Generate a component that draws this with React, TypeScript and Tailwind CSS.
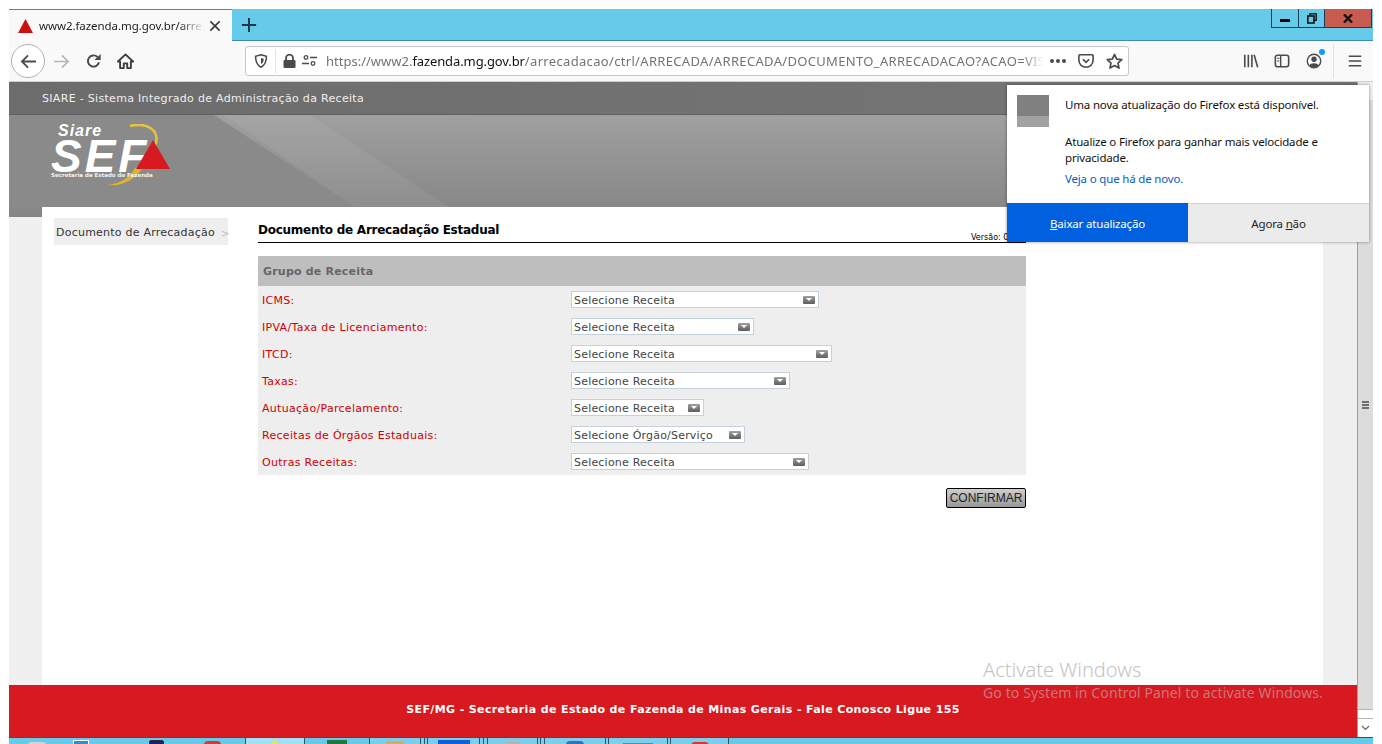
import React from "react";

const ui = "font-['Noto_Sans',sans-serif]";
const verdana = "font-['DejaVu_Sans',sans-serif]";

const rows = [
  { label: "ICMS:", text: "Selecione Receita", width: "w-[248px]" },
  { label: "IPVA/Taxa de Licenciamento:", text: "Selecione Receita", width: "w-[183px]" },
  { label: "ITCD:", text: "Selecione Receita", width: "w-[261px]" },
  { label: "Taxas:", text: "Selecione Receita", width: "w-[219px]" },
  { label: "Autuação/Parcelamento:", text: "Selecione Receita", width: "w-[133px]" },
  { label: "Receitas de Órgãos Estaduais:", text: "Selecione Órgão/Serviço", width: "w-[174px]" },
  { label: "Outras Receitas:", text: "Selecione Receita", width: "w-[238px]" },
];

function Icon({ children, size = 18, className = "" }: { children: React.ReactNode; size?: number; className?: string }) {
  return (
    <svg width={size} height={size} viewBox="0 0 18 18" fill="none" className={className}>
      {children}
    </svg>
  );
}

function TabBar() {
  return (
    <div className="flex h-[32px] bg-[#66cbea] border-b border-[#3f8ea8]">
      <div className="relative flex h-[32px] w-[223px] items-center bg-[#f9f9fa] border-t border-[#2a8fe0] pl-[9px]">
        <svg width="15" height="14" viewBox="0 0 15 14">
          <polygon points="7.5,0 15,14 0,14" fill="#cc1010" />
        </svg>
        <span className={`${ui} ml-[6px] w-[165px] overflow-hidden whitespace-nowrap text-[11.5px] tracking-[-0.06px] text-[#222] [mask-image:linear-gradient(to_right,black_85%,transparent)]`}>
          www2.fazenda.mg.gov.br/arrecadacao
        </span>
        <Icon size={12} className="ml-[5px]">
          <path d="M2 2 L16 16 M16 2 L2 16" stroke="#3a3a3c" strokeWidth="2.4" />
        </Icon>
      </div>
      <div className="flex w-[34px] items-center justify-center">
        <Icon size={16}>
          <path d="M9 1 V17 M1 9 H17" stroke="#1d3a4a" strokeWidth="2.2" />
        </Icon>
      </div>
      <div className="flex-1" />
      <div className="mr-[1px] flex h-[19px] border border-t-0 border-[#1d3f55]">
        <div className="flex w-[27px] items-center justify-center border-r border-[#1d3f55]">
          <div className="mt-[4px] h-[3px] w-[10px] bg-black" />
        </div>
        <div className="flex w-[26px] items-center justify-center border-r border-[#1d3f55]">
          <svg width="10" height="11" viewBox="0 0 10 11" fill="none">
            <rect x="3" y="0.8" width="6.2" height="6.5" stroke="#111" strokeWidth="1.4" />
            <rect x="0.8" y="3" width="6.2" height="7" fill="#66cbea" stroke="#111" strokeWidth="1.6" />
          </svg>
        </div>
        <div className="flex w-[46px] items-center justify-center bg-[#c75b50]">
          <svg width="10" height="9" viewBox="0 0 10 9">
            <path d="M1 0.5 L9 8.5 M9 0.5 L1 8.5" stroke="#111" strokeWidth="2.4" />
          </svg>
        </div>
      </div>
    </div>
  );
}

function Toolbar() {
  return (
    <div className="flex h-[41px] items-center bg-[#f9f9fa] border-b border-[#cfcfd1] pl-[2px] text-[#4a4a4f]">
      <div className="flex h-[34px] w-[34px] items-center justify-center rounded-full border border-[#b1b1b3] bg-white">
        <Icon size={17}>
          <path d="M17 9 H2 M8.5 2.5 L2 9 L8.5 15.5" stroke="#4a4a4f" strokeWidth="1.9" />
        </Icon>
      </div>
      <Icon size={17} className="ml-[8px]">
        <path d="M1 9 H16 M9.5 2.5 L16 9 L9.5 15.5" stroke="#b5b5b7" strokeWidth="1.7" />
      </Icon>
      <Icon size={16} className="ml-[16px]">
        <path d="M14.6 10.5 A6.3 6.3 0 1 1 13 4.6" stroke="#4a4a4f" strokeWidth="2.2" />
        <path d="M16.5 1 V8 H9.5 Z" fill="#4a4a4f" />
      </Icon>
      <Icon size={17} className="ml-[15px]">
        <path d="M1 9 L9 1.5 L17 9 H14.7 V16 H10.8 V11 H7.2 V16 H3.3 V9 Z" stroke="#3d3d40" strokeWidth="2" strokeLinejoin="round" />
      </Icon>
      <div className="ml-[111px] flex h-[30px] w-[884px] items-center rounded-[3px] border border-[#c8c8ca] bg-white">
        <Icon size={14} className="ml-[8px]">
          <path d="M9 1 L16 3 C16 10 14 14.5 9 17 C4 14.5 2 10 2 3 Z" stroke="#4a4a4f" strokeWidth="2" />
          <path d="M9 5 L12.5 6 C12.5 9 11.5 11.5 9 13 Z" fill="#4a4a4f" />
        </Icon>
        <div className="ml-[7px] h-[24px] w-px bg-[#e3e3e5]" />
        <svg width="13" height="14" viewBox="0 0 13 14" className="ml-[7px]">
          <path d="M3 6 V4.2 A3.5 3.5 0 0 1 10 4.2 V6" fill="none" stroke="#4a4a4f" strokeWidth="1.8" />
          <rect x="0.5" y="6" width="12" height="8" rx="1" fill="#4a4a4f" />
        </svg>
        <svg width="15" height="12" viewBox="0 0 15 12" fill="none" className="ml-[6px]">
          <circle cx="4" cy="2.5" r="1.8" stroke="#4a4a4f" strokeWidth="1.3" />
          <path d="M8 2.5 H15 M0 8.5 H7" stroke="#4a4a4f" strokeWidth="1.6" />
          <circle cx="11" cy="8.5" r="1.8" stroke="#4a4a4f" strokeWidth="1.3" />
        </svg>
        <div className={`${ui} ml-[9px] w-[718px] overflow-hidden whitespace-nowrap pt-[1px] text-[13px] text-[#737373] [mask-image:linear-gradient(to_right,black_97%,transparent)]`}>
          https://www2.<span className="tracking-[-0.1px] text-[#111]">fazenda.mg.gov.br</span>
          <span className="tracking-[0.33px]">/arrecadacao/ctrl/ARRECADA/ARRECADA/DOCUMENTO_ARRECADACAO?ACAO=VISUALIZAR</span>
        </div>
        <div className="ml-[6px] flex gap-[2px]">
          <div className="h-[4px] w-[4px] rounded-full bg-[#4a4a4f]" />
          <div className="h-[4px] w-[4px] rounded-full bg-[#4a4a4f]" />
          <div className="h-[4px] w-[4px] rounded-full bg-[#4a4a4f]" />
        </div>
        <Icon size={16} className="ml-[12px]">
          <path d="M2 2 H16 C17 2 17 3 17 3 V8 C17 13 13 16 9 16 C5 16 1 13 1 8 V3 C1 3 1 2 2 2 Z" stroke="#4a4a4f" strokeWidth="1.8" />
          <path d="M5.5 7 L9 10.5 L12.5 7" stroke="#4a4a4f" strokeWidth="1.9" />
        </Icon>
        <Icon size={17} className="ml-[12px]">
          <path d="M9 1.5 L11.3 6.4 L16.7 7 L12.7 10.7 L13.8 16 L9 13.3 L4.2 16 L5.3 10.7 L1.3 7 L6.7 6.4 Z" stroke="#4a4a4f" strokeWidth="1.8" strokeLinejoin="round" />
        </Icon>
      </div>
      <div className="flex-1" />
      <Icon size={16}>
        <path d="M2 2 V16 M6 2 V16 M10 2 V16 M12.5 2 L16.5 16" stroke="#4a4a4f" strokeWidth="1.8" />
      </Icon>
      <Icon size={16} className="ml-[15px]">
        <rect x="1.5" y="2.5" width="15" height="13" rx="2.5" stroke="#4a4a4f" strokeWidth="1.8" />
        <path d="M7.5 3 V15" stroke="#4a4a4f" strokeWidth="1.6" />
        <path d="M3.5 6 H6 M3.5 9 H6" stroke="#4a4a4f" strokeWidth="1.2" />
      </Icon>
      <div className="relative ml-[16px]">
        <Icon size={16}>
          <circle cx="9" cy="9" r="7.6" stroke="#4a4a4f" strokeWidth="1.5" />
          <circle cx="9" cy="7" r="3" fill="#4a4a4f" />
          <path d="M3.8 14 C5 10.8 13 10.8 14.2 14 C12 16.5 6 16.5 3.8 14 Z" fill="#4a4a4f" />
        </Icon>
        <div className="absolute right-[-3px] top-[-4px] h-[6px] w-[6px] rounded-full bg-[#0a9dff]" />
      </div>
      <div className="ml-[11px] h-[34px] w-px bg-[#dfdfe1]" />
      <Icon size={14} className="ml-[14px] mr-[11px]">
        <path d="M1 3 H17 M1 9 H17 M1 15 H17" stroke="#4a4a4f" strokeWidth="2" />
      </Icon>
    </div>
  );
}

function Logo() {
  return (
    <div className="relative ml-[42px] h-[64px] w-[122px]">
      <svg width="122" height="64" viewBox="0 0 122 64" fill="none" className="absolute left-0 top-0">
        <path d="M79 2 C96 -2 110 6 104 22" stroke="#e5c33a" strokeWidth="2.5" />
        <path d="M92 43 C85 55 72 63 56 61 C70 60 80 52 84 44 Z" fill="#d9b531" />
      </svg>
      <span className="absolute left-[7px] top-[-1px] font-['Liberation_Sans',sans-serif] text-[16px] leading-[16px] font-bold italic tracking-[1px] text-white">
        Siare
      </span>
      <span className="absolute left-[0px] top-[9px] font-['Liberation_Sans',sans-serif] text-[46px] leading-[46px] font-bold italic tracking-[3px] text-white">
        SEF
      </span>
      <svg width="34" height="29" viewBox="0 0 34 29" className="absolute left-[85px] top-[16px]">
        <polygon points="17,0 34,29 0,29" fill="#d71920" />
      </svg>
      <span className={`${verdana} absolute left-0 top-[47px] whitespace-nowrap text-[5.5px] leading-[8px] font-bold text-[#f2f2f2]`}>
        Secretaria de Estado de Fazenda
      </span>
    </div>
  );
}

function Select({ text, width }: { text: string; width: string }) {
  return (
    <div className={`${width} flex h-[17px] items-center justify-between border border-[#c5d2de] bg-white pl-[2px] pr-[3px]`}>
      <span className="pt-[1px] text-[11px] leading-[15px] tracking-[0.2px] text-[#444]">{text}</span>
      <div className="flex h-[8px] w-[12px] items-center justify-center rounded-[1px] bg-gradient-to-b from-[#a0a0a0] to-[#5e5e5e]">
        <div className="h-0 w-0 border-x-[3px] border-t-[3px] border-x-transparent border-t-white" />
      </div>
    </div>
  );
}

function PageContent() {
  return (
    <div className={`${verdana} -mt-[10px] flex flex-1 bg-[#f0f0f0] pl-[33px] pr-[34px]`}>
      <div className="relative flex flex-1 bg-white pl-[12px]">
        <div className="mt-[11px] flex h-[27px] w-[174px] items-center whitespace-nowrap bg-[#eeeeee] pl-[2px] pt-[3px] text-[11px] tracking-[0.23px] text-[#333]">
          Documento de Arrecadação
          <span className="ml-[6px] text-[10px] text-[#bbb]">&gt;</span>
        </div>
        <div className="ml-[30px] flex w-[768px] flex-col">
          <div className="relative mt-[13px] h-[23px] border-b border-black pt-[1px] text-[12px] leading-[18px] font-bold tracking-[-0.25px] text-black">
            Documento de Arrecadação Estadual
            <span className="absolute left-[713px] top-[13px] whitespace-nowrap text-[8px] leading-[10px] font-normal tracking-normal">Versão: 0</span>
          </div>
          <div className="mt-[13px] flex h-[30px] items-center bg-[#bebebe] pl-[5px] pt-[3px] text-[11px] font-bold tracking-[0.2px] text-[#666]">
            Grupo de Receita
          </div>
          <div className="bg-[#eeeeee]">
            {rows.map((row) => (
              <div key={row.label} className="flex h-[27px] items-center pl-[4px]">
                <div className="w-[309px] pt-[3px] text-[11px] tracking-[0.3px] text-[#d00000]">{row.label}</div>
                <Select text={row.text} width={row.width} />
              </div>
            ))}
          </div>
          <div className="mt-[13px] flex justify-end">
            <button className="h-[20px] w-[80px] rounded-[2px] border border-black bg-gradient-to-b from-[#cfcfcf] to-[#989898] font-['Liberation_Sans',sans-serif] text-[12px] leading-[16px] text-[#222]">
              CONFIRMAR
            </button>
          </div>
        </div>
      </div>
    </div>
  );
}

function Scrollbar() {
  return (
    <div className="flex w-[16px] flex-col border-l border-[#9f9f9f] bg-[#dcdcdc]">
      <div className="h-[18px] bg-[#f0f0f0]" />
      <div className="flex flex-1 flex-col items-center justify-center gap-[1px]">
        <div className="h-[2px] w-[7px] bg-[#6f6f6f]" />
        <div className="h-[2px] w-[7px] bg-[#6f6f6f]" />
        <div className="h-[2px] w-[7px] bg-[#6f6f6f]" />
      </div>
      <div className="h-[10px] border-y border-[#b5b5b5] bg-white" />
      <div className="flex h-[18px] items-center justify-center bg-white">
        <svg width="9" height="6" viewBox="0 0 9 6" fill="none">
          <path d="M1 1 L4.5 4.5 L8 1" stroke="#666" strokeWidth="1.2" />
        </svg>
      </div>
    </div>
  );
}

function UpdatePopup() {
  return (
    <div className={`${ui} absolute left-[998px] top-[3px] z-10 flex h-[157px] w-[362px] flex-col bg-white text-[11.5px] tracking-[-0.17px] text-[#111] shadow-[0_0_3px_rgba(0,0,0,0.45)]`}>
      <div className="flex flex-1 pl-[10px] pt-[10px]">
        <div className="h-[32px] w-[32px] bg-gradient-to-b from-[#808080] from-[65%] to-[#a2a2a2] to-[65%]" />
        <div className="ml-[16px] w-[262px] leading-[16px]">
          <div className="mt-[2px]">Uma nova atualização do Firefox está disponível.</div>
          <div className="mt-[21px]">Atualize o Firefox para ganhar mais velocidade e privacidade.</div>
          <div className="mt-[5px] text-[#0a5bc4]">Veja o que há de novo.</div>
        </div>
      </div>
      <div className="flex h-[39px]">
        <div className="flex w-[181px] items-center justify-center bg-[#0060df] pt-[2px] text-white">
          <span><u>B</u>aixar atualização</span>
        </div>
        <div className="flex flex-1 items-center justify-center border-t border-[#d4d4d4] bg-[#ebebeb] pt-[2px] text-[#222]">
          <span>Agora <u>n</u>ão</span>
        </div>
      </div>
    </div>
  );
}

function ActivateWatermark() {
  return (
    <div className={`${ui} pointer-events-none absolute left-[974px] top-[576px]`}>
      <div className="text-[20px] leading-[24px] font-light text-[#c4c4c4]">Activate Windows</div>
      <div className="mt-[2px] whitespace-nowrap text-[14px] leading-[18px] tracking-[0.11px] text-[#c4c4c4]/55">
        Go to System in Control Panel to activate Windows.
      </div>
    </div>
  );
}

function Taskbar() {
  return (
    <div className="relative flex h-[7px] overflow-hidden border-t border-[#2a5566] bg-[#66cbea]">
      <div className="flex w-[236px] items-start">
        <div className="ml-[19px] mt-[4px] h-[3px] w-[18px] rounded-t-[4px] bg-[#d0d4d6]" />
        <div className="ml-[27px] mt-[2px] h-[5px] w-[16px] border border-white bg-[#2b8fd8]" />
        <div className="ml-[60px] mt-[2px] h-[5px] w-[15px] rounded-t-[2px] border border-[#333] bg-[#1c1c80]" />
        <div className="ml-[40px] mt-[3px] h-[8px] w-[17px] rounded-full bg-[#e0352b]" />
      </div>
      <div className="flex h-[7px] w-[60px] justify-center border-x border-[#2a5566] bg-[#a3dff5]">
        <div className="mt-[2px] h-0 w-0 border-x-[6px] border-b-[6px] border-x-transparent border-b-[#f4e04d]" />
      </div>
      <div className="flex w-[64px] justify-center">
        <div className="mt-[2px] h-[5px] w-[20px] bg-[#1f7a3d]" />
      </div>
      <div className="flex h-[7px] w-[51px] justify-center border-l border-[#2a5566] bg-[#78d0ee]">
        <div className="mt-[3px] h-[4px] w-[18px] rounded-t-[3px] bg-[#d8ac5c]" />
      </div>
      <div className="h-[7px] w-[5px] border-x border-[#2a5566] bg-[#78d0ee]" />
      <div className="h-[7px] w-[2px] bg-[#78d0ee]" />
      <div className="flex h-[7px] w-[52px] justify-center border-l border-[#2a5566] bg-[#78d0ee]">
        <div className="mt-[2px] h-[5px] w-[32px] bg-[#0a62d8]" />
      </div>
      <div className="h-[7px] w-[5px] border-x border-[#2a5566] bg-[#78d0ee]" />
      <div className="h-[7px] w-[3px] bg-[#78d0ee]" />
      <div className="flex h-[7px] w-[50px] justify-center border-l border-[#2a5566] bg-[#78d0ee]">
        <div className="mt-[4px] h-[3px] w-[14px] bg-[#b4b4b4]" />
      </div>
      <div className="h-[7px] w-[4px] border-x border-[#2a5566] bg-[#78d0ee]" />
      <div className="h-[7px] w-[3px] bg-[#78d0ee]" />
      <div className="flex h-[7px] w-[61px] justify-center border-l border-[#2a5566] bg-[#78d0ee]">
        <div className="mt-[3px] h-[8px] w-[18px] rounded-full bg-[#2a72c8]" />
      </div>
      <div className="h-[7px] w-[3px] border-l border-[#2a5566] bg-[#78d0ee]" />
      <div className="flex h-[7px] w-[59px] justify-center border-l border-[#2a5566] bg-[#78d0ee]">
        <div className="mt-[5px] h-[2px] w-[30px] bg-[#7c7c7c]" />
      </div>
      <div className="h-[7px] w-[3px] border-l border-[#2a5566] bg-[#78d0ee]" />
      <div className="flex h-[7px] w-[59px] justify-center border-x border-[#2a5566] bg-[#78d0ee]">
        <div className="mt-[4px] h-[8px] w-[18px] rounded-full bg-[#e0352b]" />
      </div>
      <div className="flex-1" />
      <span className="mr-[16px] mt-[4px] font-['Liberation_Sans',sans-serif] text-[12px] leading-[14px] text-black">00:00 PM</span>
    </div>
  );
}

export default function App() {
  return (
    <div className="h-[744px] w-[1382px] overflow-hidden bg-white pl-[9px] pr-[9px] pt-[9px]">
      <div className="flex h-[735px] flex-col">
        <TabBar />
        <Toolbar />
        <div className="relative flex flex-1">
          <div className="flex flex-1 flex-col">
            <div className={`${verdana} flex h-[33px] items-center border-b border-[#5f5f5f] bg-gradient-to-r from-[#6c6c6c] to-[#777777] pl-[33px] pt-[2px] text-[11px] tracking-[0.31px] text-[#efefef]`}>
              SIARE - Sistema Integrado de Administração da Receita
            </div>
            <div className="relative h-[102px] bg-gradient-to-b from-[#a0a0a0] to-[#858585] pt-[9px]">
              <svg viewBox="0 0 1348 102" preserveAspectRatio="none" className="absolute left-0 top-0 h-full w-full">
                <polygon points="0,0 205,0 345,92 0,92" fill="#8a8a8a" />
                <polygon points="215,0 300,0 440,92 345,92" fill="#ffffff" opacity="0.06" />
              </svg>
              <Logo />
            </div>
            <PageContent />
            <div className={`${verdana} flex h-[52px] items-center justify-center bg-[#d71920] pb-[2px] text-[11px] font-bold tracking-[0.37px] text-white`}>
              SEF/MG - Secretaria de Estado de Fazenda de Minas Gerais - Fale Conosco Ligue 155
            </div>
          </div>
          <Scrollbar />
          <UpdatePopup />
          <ActivateWatermark />
        </div>
        <Taskbar />
      </div>
    </div>
  );
}
